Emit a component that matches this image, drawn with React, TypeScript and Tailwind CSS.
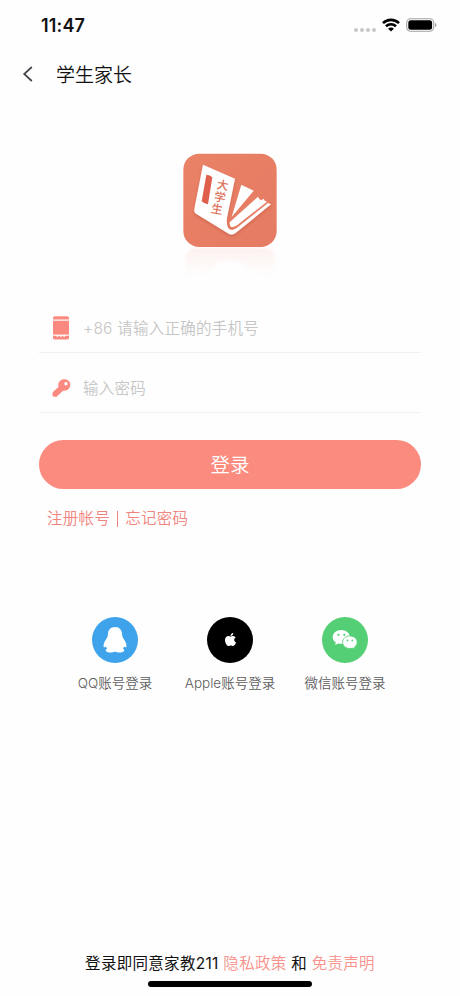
import type { ReactNode } from "react";
import { FaApple } from "react-icons/fa";

const SOCIAL_LOGINS = [
  { label: "QQ账号登录", color: "bg-[#3ea3ea]", icon: <QQIcon /> },
  { label: "Apple账号登录", color: "bg-black", icon: <FaApple className="mb-px size-[15px] text-white" /> },
  { label: "微信账号登录", color: "bg-[#55cf75]", icon: <WeChatIcon /> },
];

function QQIcon() {
  return (
    <svg viewBox="0 0 24 26" className="h-[26px] w-6" fill="#fff">
      <path d="M12 0C7.600 0 5.200 2.800 5 6.800c-.1 1.500-.3 2.600-.8 3.700C2.600 13.200.500 15.600.500 19c0 1.600 1 1.800 2.500.4.3.8.7 1.500 1.200 2.100-1.200.6-1.600 1.400-1.400 2.300.5 2 6.300 2.400 9.200.8 2.900 1.600 8.700 1.200 9.200-.8.2-.9-.2-1.700-1.400-2.300.5-.6.9-1.300 1.200-2.100 1.500 1.400 2.500 1.200 2.500-.4 0-3.400-2.100-5.800-3.700-8.500-.5-1.100-.7-2.200-.8-3.700C18.800 2.800 16.400 0 12 0Z" />
    </svg>
  );
}

function WeChatIcon() {
  return (
    <svg viewBox="0 0 26 22" className="h-[22px] w-[26px]">
      <path d="M9.300.9C4.600.9.700 3.900.7 7.900c0 2.300 1.200 4.200 3.100 5.500L3.200 16l3-1.600c1 .3 2 .4 3.100.4 4.700 0 8.500-3.100 8.500-6.900S14 .9 9.300.9Z" fill="#fff" />
      <path d="M17.900 6.900c-4.100 0-7.300 2.800-7.300 6.300s3.200 6.300 7.300 6.300c.9 0 1.800-.1 2.600-.4l2.400 1.300-.6-2.100c1.700-1.200 2.900-3 2.900-5.100 0-3.500-3.200-6.300-7.300-6.300Z" fill="#fff" stroke="#55cf75" strokeWidth=".8" />
      <g fill="#55cf75">
        <circle cx="6.400" cy="5.800" r="1.100" />
        <circle cx="12.300" cy="5.800" r="1.100" />
        <circle cx="15.500" cy="11.400" r=".9" />
        <circle cx="20.300" cy="11.400" r=".9" />
      </g>
    </svg>
  );
}

function PhoneIcon() {
  return (
    <svg viewBox="0 0 16 24" className="h-6 w-4" fill="#fa8a80">
      <path d="M0 3.400V2Q0 .3 2 .3h12q2 0 2 1.700v1.400Z" />
      <path d="M0 4.700h16v13.900H0Z" />
      <path d="M0 19.700h3.500v1h1.800v-1h1.500v1h2v-1h1.500v1h1.800v-1H16V22q0 1.500-2 1.500H2Q0 23.500 0 22Z" />
    </svg>
  );
}

// Thick handle running down to the left from a round head with a small eye.
function KeyIcon() {
  return (
    <svg viewBox="0 0 20 20" className="ml-px size-5" fill="#fa8a80">
      <path
        fillRule="evenodd"
        d="M13 .8C9.300.8 6.600 3.500 6.600 6.900q0 1 .3 1.900L1.300 14Q.5 14.800.5 16v1.300q0 2 2 2h1.300q1.400 0 2-.9l.5-.9q.4-.5 1.100-.6 1-.2 1.400-1l.4-.9q.3-.6 1.100-.8l1.300-1.400c.5.1.9.100 1.400.100 3.500 0 6.300-2.700 6.300-6.200S16.500.8 13 .8Zm1.700 3a1.800 1.800 0 1 1 0 3.600 1.800 1.800 0 0 1 0-3.600Z"
      />
    </svg>
  );
}

function StatusBar() {
  return (
    <div className="flex h-[50px] items-center justify-between pr-[23px] pl-[41px]">
      <span className="mt-[2px] font-['Inter',sans-serif] text-[18px] leading-none font-semibold tracking-[0.15px]">11:47</span>
      <div className="flex items-center">
        <div className="mt-[9px] mr-[6px] flex gap-[2px]">
          {[0, 1, 2, 3].map((dot) => (
            <span key={dot} className="size-1 rounded-full bg-[#c8c8ca]" />
          ))}
        </div>
        <svg viewBox="0 0 18 14" className="mr-[6px] h-[14px] w-[18px]" fill="none" stroke="#000" strokeWidth="2.600">
          <path d="M1 5.100a11.500 11.500 0 0 1 16 0" />
          <path d="M4 8.300a7.200 7.200 0 0 1 10 0" />
          <path d="M9 13.600 6.100 10.700a4 4 0 0 1 5.800 0Z" fill="#000" stroke="none" />
        </svg>
        <svg viewBox="0 0 31 14" className="h-[14px] w-[31px]">
          <rect x=".7" y=".7" width="27" height="12.600" rx="4" fill="none" stroke="#a3a3a3" strokeWidth="1.100" />
          <rect x="2.300" y="2.200" width="23.800" height="9.600" rx="2.500" />
          <path d="M29 5q1.500.5 1.500 2T29 9Z" fill="#a3a3a3" />
        </svg>
      </div>
    </div>
  );
}

function AppLogo() {
  return (
    <svg viewBox="0 0 280 396" className="h-[132px] w-[94px]">
      <defs>
        <linearGradient id="tile" x1="0" y1="0" x2="1" y2="1">
          <stop stopColor="#ea8267" />
          <stop offset="1" stopColor="#e57b62" />
        </linearGradient>
        <linearGradient id="reflection" x1="0" y1="0" x2="0" y2="1">
          <stop stopColor="#e97b60" stopOpacity=".1" />
          <stop offset="1" stopColor="#e97b60" stopOpacity="0" />
        </linearGradient>
        <filter id="bookShadow" x="-20%" y="-20%" width="140%" height="150%">
          <feDropShadow dx="0" dy="6" stdDeviation="5" floodColor="#9c3b28" floodOpacity=".3" />
        </filter>
        <filter id="soft">
          <feGaussianBlur stdDeviation="5" />
        </filter>
      </defs>
      <path d="M6 306Q16 284 48 284h184q32 0 42 22v64l-62-10q-32-38-72-38t-72 38l-62 10Z" fill="url(#reflection)" filter="url(#soft)" />
      <rect y="2" width="280" height="280" rx="48" fill="url(#tile)" />
      <g fill="#fff">
        <path filter="url(#bookShadow)" d="M59 35 155 77 131 195Q127 231 147 231q8-1 16-8l91-73 9 4L156 241q-10 7-20 1L38 182q-7-5-5-14Z" />
        <path d="M174 95 211 113 145 192Z" />
        <path d="M224 131q3 7 9 11l9-5q0 7 9 9l-90 71q-23 14-22-9Z" />
      </g>
      <path d="M69 65q11 0 18 8L74 154q-11-1-19-9Z" fill="#df604d" />
      <g
        fill="#dc7058"
        fontSize="35"
        textAnchor="middle"
        className="font-['Noto_Sans_CJK_SC',sans-serif] font-medium"
      >
        <text x="118" y="109" transform="rotate(10 118 97)">大</text>
        <text x="110" y="145" transform="rotate(10 110 133)">学</text>
        <text x="101" y="181" transform="rotate(10 101 169)">生</text>
      </g>
    </svg>
  );
}

function Field({ icon, placeholder, type }: { icon: ReactNode; placeholder: string; type: string }) {
  return (
    <label className="flex h-[60px] items-center border-b border-[#f0f0f0] pt-[10px]">
      <span className="ml-3 flex w-5 shrink-0 justify-center">{icon}</span>
      <input
        type={type}
        placeholder={placeholder}
        className="ml-3 min-w-0 flex-1 pt-[2px] text-[15.500px] font-[350] tracking-[0.25px] outline-none placeholder:text-[#c6c6c6]"
      />
    </label>
  );
}

export default function App() {
  return (
    <div className="flex h-[996px] w-[460px] flex-col bg-[#fefefe] font-['Inter','Noto_Sans_CJK_SC',sans-serif] text-[#111]">
      <StatusBar />
      <header className="flex h-12 items-center pl-[22px]">
        <button type="button" aria-label="返回">
          <svg viewBox="0 0 12 16" className="h-4 w-3" fill="none" stroke="#44444a" strokeWidth="1.700">
            <path d="M9.800 1 2.200 8l7.600 7" />
          </svg>
        </button>
        <h1 className="ml-[22px] pt-[2px] text-[19px] leading-none font-[350]">学生家长</h1>
      </header>

      <main className="flex flex-col px-[39px] pt-[55px]">
        <div className="flex h-[140px] justify-center">
          <AppLogo />
        </div>

        <form>
          <Field type="tel" icon={<PhoneIcon />} placeholder="+86 请输入正确的手机号" />
          <Field type="password" icon={<KeyIcon />} placeholder="输入密码" />
          <button type="button" className="mt-[27px] h-[49px] w-full rounded-full bg-[#fb8b7f] pt-[2px] text-[19.500px] font-[350] text-white">
            登录
          </button>
        </form>

        <div className="mt-[18px] flex h-6 items-center pl-2 text-[15.500px] font-[350] tracking-[0.3px] text-[#f0857f]">
          <a href="#register">注册帐号</a>
          <span className="mx-[7px] h-4 w-px bg-[#f0857f]" />
          <a href="#forgot">忘记密码</a>
        </div>

        <div className="mt-[86px] grid grid-cols-[115px_115px_115px] justify-center">
          {SOCIAL_LOGINS.map((item) => (
            <button key={item.label} type="button" className="flex flex-col items-center">
              <span className={`flex size-[46px] items-center justify-center rounded-full ${item.color}`}>{item.icon}</span>
              <span className="mt-[10px] text-[13.500px] leading-5 font-[350] whitespace-nowrap text-[#5c5c5c]">{item.label}</span>
            </button>
          ))}
        </div>
      </main>

      <footer className="mt-auto flex flex-col items-center pb-[9px]">
        <p className="mb-[5px] text-[15.500px] leading-6 font-normal tracking-[0.3px] whitespace-pre">
          登录即同意家教211 <a href="#privacy" className="font-[350] text-[#f7928c]">隐私政策</a> 和{" "}
          <a href="#disclaimer" className="font-[350] text-[#f7928c]">免责声明</a>
        </p>
        <div className="h-[6px] w-[164px] rounded-full bg-black" />
      </footer>
    </div>
  );
}
